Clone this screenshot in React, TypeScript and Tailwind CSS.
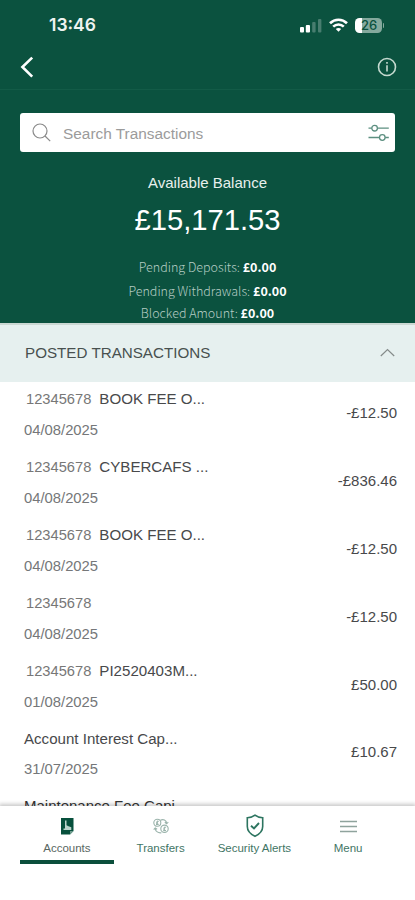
import React from 'react';

interface Transaction {
  account?: string;
  title?: string;
  date: string;
  amount: string;
}

const transactions: Transaction[] = [
  { account: '12345678', title: 'BOOK FEE O...', date: '04/08/2025', amount: '-£12.50' },
  { account: '12345678', title: 'CYBERCAFS ...', date: '04/08/2025', amount: '-£836.46' },
  { account: '12345678', title: 'BOOK FEE O...', date: '04/08/2025', amount: '-£12.50' },
  { account: '12345678', date: '04/08/2025', amount: '-£12.50' },
  { account: '12345678', title: 'PI2520403M...', date: '01/08/2025', amount: '£50.00' },
  { title: 'Account Interest Cap...', date: '31/07/2025', amount: '£10.67' },
];

const pending = [
  { label: 'Pending Deposits:', value: '£0.00', row: 'h-6' },
  { label: 'Pending Withdrawals:', value: '£0.00', row: 'h-[22px]' },
  { label: 'Blocked Amount:', value: '£0.00', row: 'h-[22px]' },
];

const StatusBar: React.FC = () => (
  <div className="flex h-[50px] items-center justify-between pl-[49px] pr-[31px]">
    <span className="font-['Inter'] text-[17.5px] font-semibold leading-none text-[#eef4f1]">13:46</span>
    <div className="flex items-center gap-[7px]">
      <svg width="22" height="15" viewBox="0 0 22 15" fill="#fff">
        <rect x="0" y="9" width="4" height="5.5" rx="1" />
        <rect x="5.8" y="7" width="4.2" height="7.5" rx="1" />
        <rect x="12.2" y="4" width="3.4" height="10.5" rx="1" opacity=".25" />
        <rect x="18" y="1" width="3.4" height="13.5" rx="1" opacity=".25" />
      </svg>
      <svg width="19" height="14" viewBox="0 0 19 14" fill="none" stroke="#fff" strokeWidth="2.6">
        <path d="M1 5.3C5.8.6 13.2.6 18 5.3" />
        <path d="M4.2 8.6c3-2.9 7.6-2.9 10.6 0" />
        <path d="M9.5 13.8 6.8 11c1.5-1.4 3.9-1.4 5.4 0z" fill="#fff" stroke="none" />
      </svg>
      <div className="flex items-center gap-px">
        <div className="flex h-[15px] w-[27px] items-center justify-center rounded-[4.5px] bg-[linear-gradient(90deg,#fff_0_26%,#84a99d_26%)] pl-0.5 font-['Inter'] text-[13px] font-medium leading-none text-[#0b523f]">
          26
        </div>
        <div className="h-[5px] w-[1.5px] rounded-r bg-[#84a99d]" />
      </div>
    </div>
  </div>
);

const NavBar: React.FC = () => (
  <div className="flex h-10 items-center justify-between border-b border-[#135b47] pb-[5px] pl-5 pr-[18px]">
    <svg width="14" height="22" viewBox="0 0 14 22" fill="none" stroke="#fff" strokeWidth="2.6">
      <path d="M12.2 1.6 2.4 11l9.8 9.6" />
    </svg>
    <svg width="20" height="20" viewBox="0 0 20 20" fill="none" stroke="#c5d9cf" strokeWidth="1.6">
      <circle cx="10" cy="10" r="8.5" />
      <path d="M10 8.2v6.3M10 5v1.7" />
    </svg>
  </div>
);

const SearchBox: React.FC = () => (
  <div className="mx-5 mt-[23px] flex h-[39px] items-center rounded-[3px] bg-white pl-3 pr-[5px]">
    <svg width="19" height="19" viewBox="0 0 19 19" fill="none" stroke="#8a8a8a" strokeWidth="1.2">
      <circle cx="8" cy="8" r="7" />
      <path d="m13 13 5.2 5.2" />
    </svg>
    <span className="ml-3 mt-[3px] flex-1 text-[15.4px] leading-none text-[#9b9b9b]">Search Transactions</span>
    <svg width="22" height="18" viewBox="0 0 22 18" fill="none" stroke="#5c8f80" strokeWidth="1.3">
      <path d="M.5 4.2h3.2M9.500 4.200h11.300M.5 13.500h10.700M17.200 13.500h3.600" />
      <circle cx="6.600" cy="4.200" r="2.800" />
      <circle cx="14.300" cy="13.500" r="2.800" />
    </svg>
  </div>
);

const TransactionRow: React.FC<{ item: Transaction }> = ({ item }) => (
  <div className="flex h-[67.9px] shrink-0 items-center justify-between pl-6 pr-[18px]">
    <div className="flex h-full flex-col pt-2">
      <div className="flex h-[19px] items-center text-[15.1px] text-[#48494b]">
        {item.account && (
          <span className="ml-0.5 mr-[8px] text-[14.7px] text-[#777]">{item.account}</span>
        )}
        <span>{item.title}</span>
      </div>
      <span className="mt-3 text-[14.8px] leading-[19px] text-[#757779]">{item.date}</span>
    </div>
    <span className="pb-[7px] text-[15px] leading-none text-[#48494b]">{item.amount}</span>
  </div>
);

const tabs = [
  {
    label: 'Accounts',
    active: true,
    icon: (
      <svg width="13" height="17" viewBox="0 0 13 17">
        <path d="M0 0h12.500v13L9 16.500H0z" fill="#07503c" />
        <path d="M4 2.500h1.500v4.800l2 1 2.800 1v2.800H2.500v-1.500H4z" fill="#b9d3ca" />
        <path d="M9 16.500V13h3.500z" fill="#6f9c8e" />
      </svg>
    ),
  },
  {
    label: 'Transfers',
    icon: (
      <svg width="16" height="16" viewBox="0 0 16 16" fill="none" stroke="#9ab3ab" strokeWidth="1.1">
        <circle cx="4.300" cy="4.800" r="3.500" />
        <circle cx="11.500" cy="10.800" r="3.700" />
        <path d="M3 6.400h2.700M4 6.200V3.700q.7-1.200 1.500 0M3.100 4.900h1.900M10.200 12.600h2.800M11.200 12.500V9.600q.8-1.200 1.600 0M10.200 11h2" />
        <path d="M7.500 2.300C10 .8 13.500 2 13.700 5.600M11.800 4.300l1.900 1.500L15.300 4M8.400 14.700c-3 .6-6-1.200-6.200-4.500M.7 11.600l1.500-1.600 1.900 1.300" />
      </svg>
    ),
  },
  {
    label: 'Security Alerts',
    icon: (
      <svg width="18" height="24" viewBox="0 0 18 24" fill="none" stroke="#2d7560" strokeWidth="1.6">
        <path d="M9 1.200c-2 1.600-4.700 2.500-7.700 2.500v8.800c0 4 3 7.600 7.700 9.800 4.700-2.200 7.700-5.800 7.700-9.800V3.700C13.700 3.700 11 2.800 9 1.200z" />
        <path d="m5 11.700 3 2.700 5-5.400" strokeWidth="1.900" />
      </svg>
    ),
  },
  {
    label: 'Menu',
    icon: (
      <svg width="17" height="13" viewBox="0 0 17 13" stroke="#8fa39d" strokeWidth="1.4">
        <path d="M0 1.500h17M0 6.500h17M0 11.500h17" />
      </svg>
    ),
  },
];

const TabBar: React.FC = () => (
  <nav className="relative grid h-[94px] shrink-0 grid-cols-4 content-start bg-white px-5 shadow-[0_-1px_4px_1px_rgba(0,0,0,0.22)]">
    {tabs.map((tab) => (
      <div key={tab.label} className="flex flex-col items-center">
        <div className="flex h-[34px] items-center pl-px pt-1.5">{tab.icon}</div>
        <span
          className={`whitespace-nowrap pt-px text-[11.5px] leading-[14px] ${
            tab.active ? 'text-[#596762]' : 'text-[#3f7565]'
          }`}
        >
          {tab.label}
        </span>
        {tab.active && <div className="mt-[5px] h-[3.5px] w-full bg-[#0b4f3c]" />}
      </div>
    ))}
  </nav>
);

export default function App() {
  return (
    <div className="flex h-[900px] w-[415px] flex-col overflow-hidden bg-white font-['Liberation_Sans',Arial,sans-serif]">
      <header className="h-[323px] shrink-0 bg-[#0b523f] text-white">
        <StatusBar />
        <NavBar />
        <SearchBox />
        <div className="flex flex-col items-center">
          <p className="mt-[23px] text-[15px] leading-4 text-[#e8f0ed]">Available Balance</p>
          <p className="mb-[18px] mt-3 text-[29.2px] leading-[34px]">£15,171.53</p>
          {pending.map((item) => (
            <p
              key={item.label}
              className={`font-['Noto_Sans_CJK_SC',sans-serif] text-[12.5px] font-light leading-6 text-[#b5ccc4] ${item.row}`}
            >
              {item.label} <b className="font-bold text-white">{item.value}</b>
            </p>
          ))}
        </div>
      </header>

      <div className="flex h-[59px] shrink-0 items-center justify-between border-t-2 border-[#cbd8d3] bg-[#e6f0ef] pb-0.5 pl-[25px] pr-5">
        <h2 className="text-[15.2px] leading-none text-[#48504f]">POSTED TRANSACTIONS</h2>
        <svg width="15" height="9" viewBox="0 0 15 9" fill="none" stroke="#858b8a" strokeWidth="1.2">
          <path d="m.8 8 6.700-6.500L14.200 8" />
        </svg>
      </div>

      <main className="flex min-h-0 flex-1 flex-col overflow-hidden">
        {transactions.map((item, index) => (
          <TransactionRow key={index} item={item} />
        ))}
        {/* next row scrolls under the tab bar */}
        <div className="shrink-0 pl-6 pt-[7px] text-[15px] leading-[19px] text-[#333]">Maintenance Fee Capi...</div>
      </main>

      <TabBar />
    </div>
  );
}
